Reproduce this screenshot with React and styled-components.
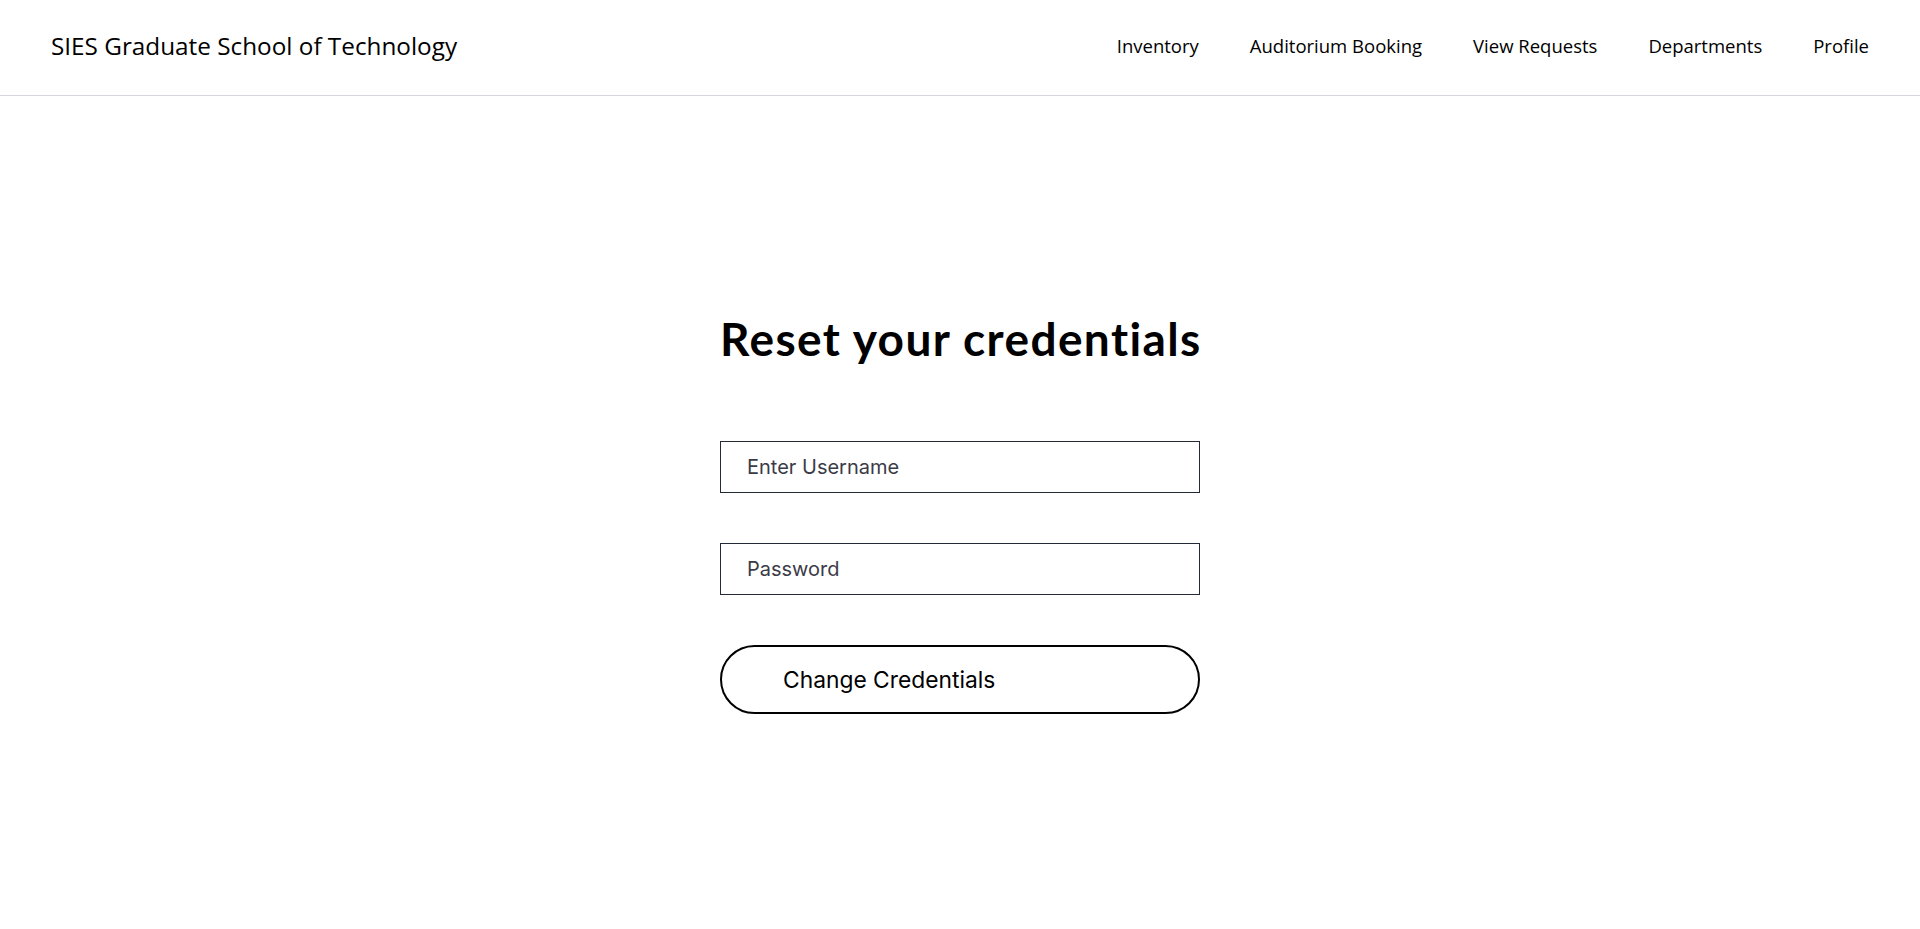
import React from "react";
import styled, { createGlobalStyle } from "styled-components";

const Global = createGlobalStyle`
  html, body { margin: 0; padding: 0; background: #ffffff; }
  body { font-family: "Open Sans", sans-serif; color: #000; }
  * { box-sizing: border-box; }
`;

const Header = styled.header`
  height: 96px;
  display: flex;
  align-items: center;
  justify-content: space-between;
  padding: 0 51px 5px 51px;
  border-bottom: 1px solid #d6d6dc;
`;

const Brand = styled.div`
  font-family: "Open Sans", sans-serif;
  font-size: 24.3px;
  font-weight: 400;
  color: #000;
`;

const Nav = styled.nav`
  display: flex;
  align-items: center;
  gap: 51px;
`;

const NavLink = styled.a`
  font-family: "Open Sans", sans-serif;
  font-size: 18.5px;
  font-weight: 400;
  color: #000;
  text-decoration: none;
  cursor: pointer;
`;

const Main = styled.main`
  display: flex;
  justify-content: center;
  padding-top: 215px;
`;

const Form = styled.form`
  width: 480px;
  display: flex;
  flex-direction: column;
`;

const Title = styled.h1`
  margin: 0 0 74px 0;
  font-family: "Lato", sans-serif;
  font-weight: 700;
  font-size: 46px;
  letter-spacing: 1.4px;
  line-height: 56px;
  text-align: center;
  white-space: nowrap;
  color: #000;
`;

const Input = styled.input`
  height: 52px;
  width: 100%;
  border: 1px solid #252b36;
  border-radius: 0;
  padding: 0 26px;
  margin-bottom: ${(p) => p.$gap}px;
  font-family: "Inter", sans-serif;
  font-size: 20px;
  color: #222;
  outline: none;
  &::placeholder { color: #3b3b48; }
`;

const Button = styled.button`
  height: 69px;
  width: 100%;
  border: 2px solid #000;
  border-radius: 35px;
  background: #fff;
  text-align: left;
  padding: 0 0 0 61px;
  font-family: "Inter", sans-serif;
  font-size: 22.8px;
  font-weight: 400;
  color: #000;
  cursor: pointer;
`;

export default function App() {
  const links = ["Inventory", "Auditorium Booking", "View Requests", "Departments", "Profile"];
  return (
    <>
      <Global />
      <Header>
        <Brand>SIES Graduate School of Technology</Brand>
        <Nav>
          {links.map((l) => (
            <NavLink key={l}>{l}</NavLink>
          ))}
        </Nav>
      </Header>
      <Main>
        <Form onSubmit={(e) => e.preventDefault()}>
          <Title>Reset your credentials</Title>
          <Input $gap={50} placeholder="Enter Username" />
          <Input $gap={50} type="password" placeholder="Password" />
          <Button type="submit">Change Credentials</Button>
        </Form>
      </Main>
    </>
  );
}
